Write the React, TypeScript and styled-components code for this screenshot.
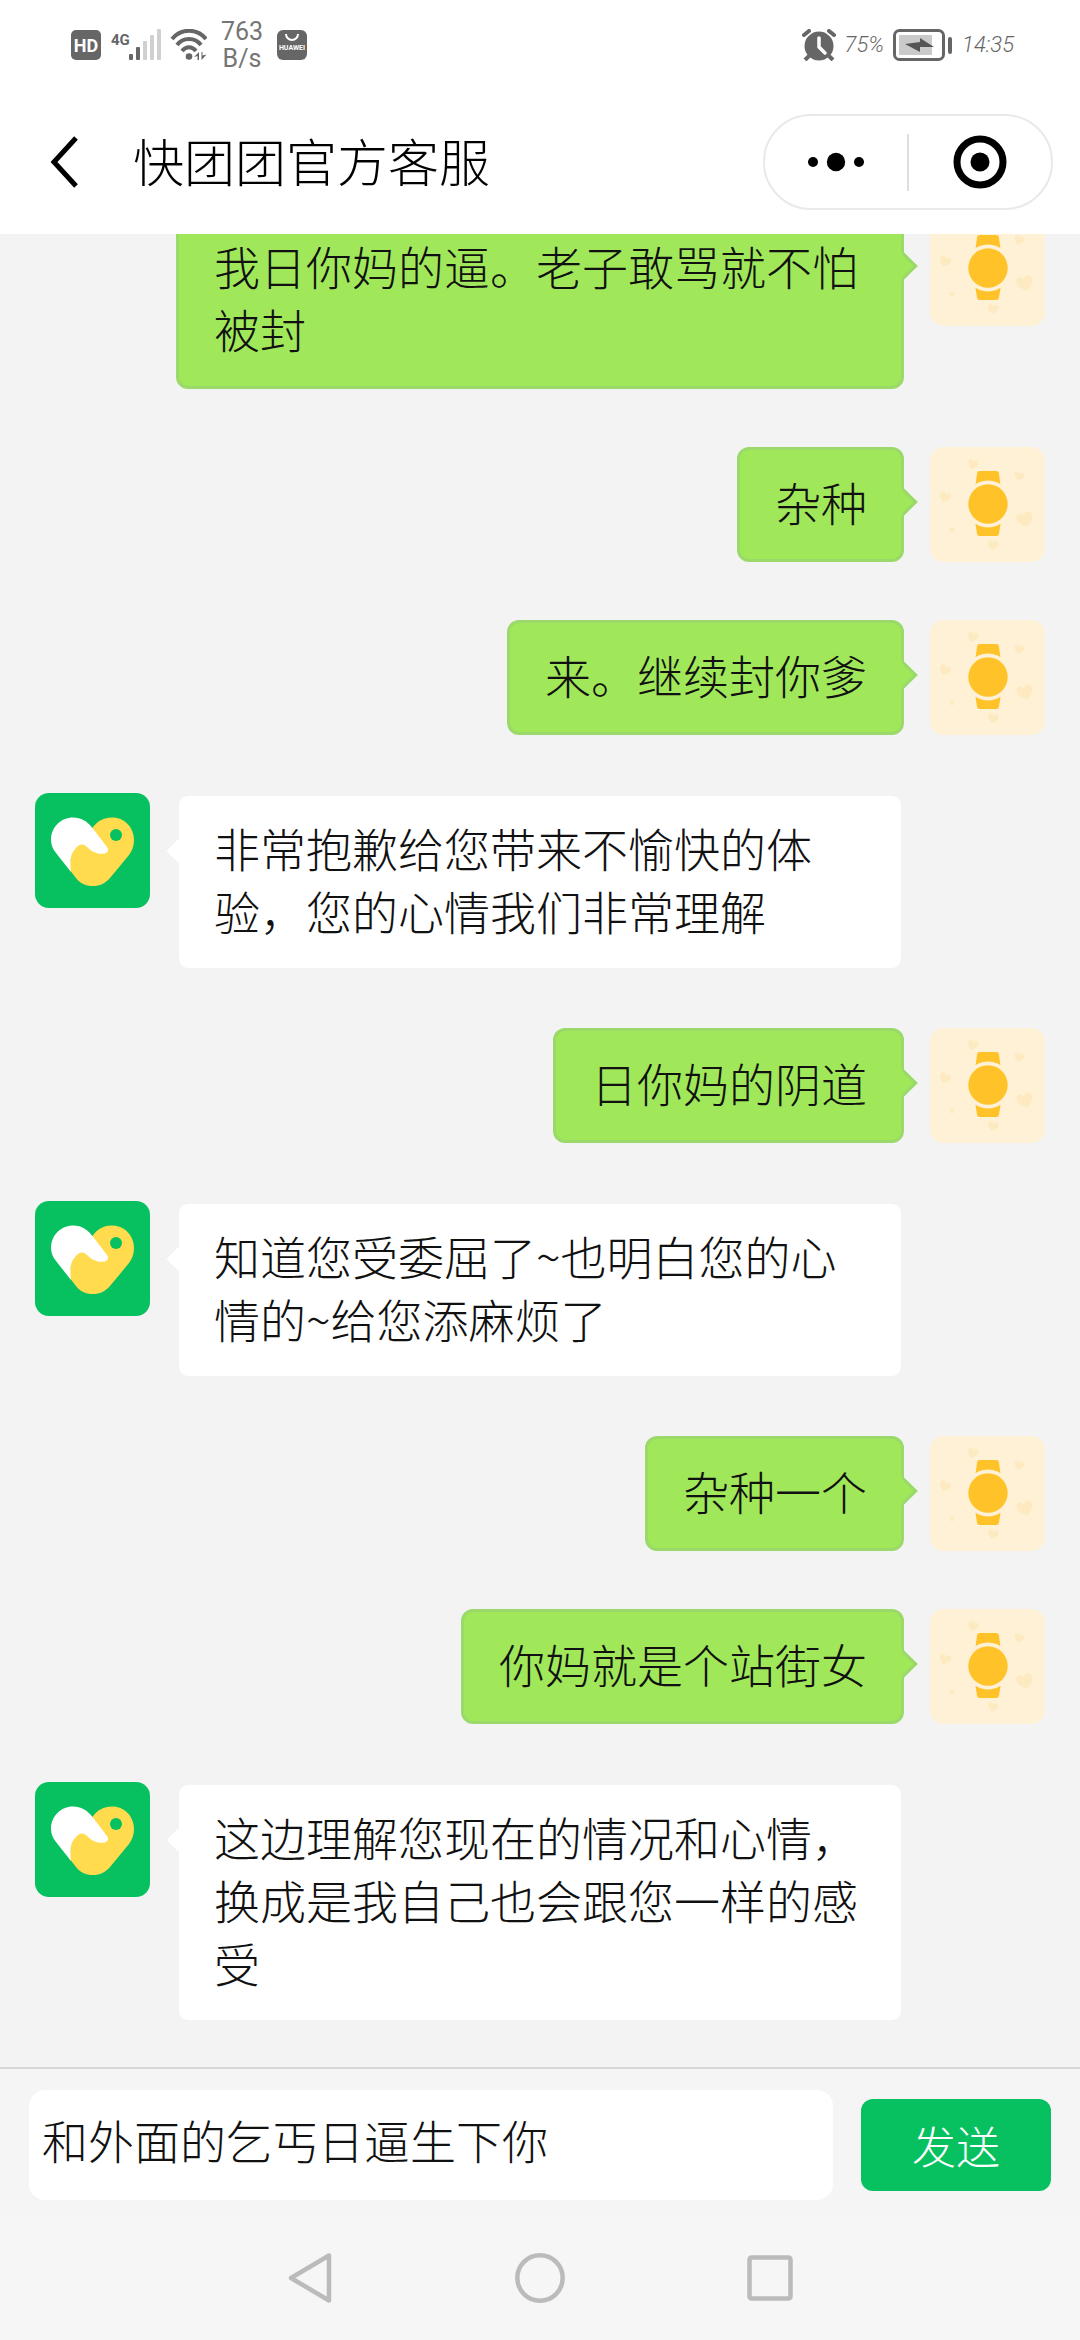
import React, { useState } from "react";
import styled, { createGlobalStyle, css } from "styled-components";

const GlobalStyle = createGlobalStyle`
  *, *::before, *::after { box-sizing: border-box; }
  html, body { margin: 0; padding: 0; }
  body { background: #f3f3f3; }
  button, textarea { font: inherit; color: inherit; border: 0; padding: 0; margin: 0; background: none; }
`;

const handFont = `"Noto Sans CJK SC", "Noto Sans", sans-serif`;

const Screen = styled.div`
  display: flex;
  flex-direction: column;
  height: 100vh;
  font-family: ${handFont};
  font-weight: 300;
  color: #111;
`;

const StatusBar = styled.div`
  display: flex;
  align-items: center;
  justify-content: space-between;
  height: 90px;
  padding: 0 66px 0 71px;
  background: #fff;
  color: #666;
`;

const StatusGroup = styled.div<{ $gap: number }>`
  display: flex;
  align-items: center;
  gap: ${(p) => p.$gap}px;
`;

const NetSpeed = styled.div`
  width: 50px;
  text-align: center;
  font: 400 25px/27px Roboto, sans-serif;
  color: #757575;
`;

const StatusText = styled.span`
  font: italic 300 22px/30px Roboto, sans-serif;
`;

const TitleBar = styled.header`
  display: flex;
  align-items: center;
  height: 144px;
  padding: 0 27px 0 39px;
  background: #fff;
  color: #000;
`;

const BackButton = styled.button`
  display: flex;
  align-items: center;
  justify-content: center;
  width: 52px;
  height: 96px;
`;

const Title = styled.h1`
  flex: 1;
  margin: 0 0 0 42px;
  padding-bottom: 4px;
  font-size: 51px;
  font-weight: 300;
  line-height: 72px;
`;

const Capsule = styled.div`
  display: flex;
  align-items: center;
  width: 290px;
  height: 96px;
  border: 2px solid #e9e9e9;
  border-radius: 48px;
`;

const CapsuleButton = styled.button`
  display: flex;
  flex: 1;
  align-items: center;
  justify-content: center;
  height: 100%;
`;

const CapsuleDivider = styled.span`
  width: 2px;
  height: 57px;
  background: #dedede;
`;

const Chat = styled.main`
  display: flex;
  flex: 1;
  flex-direction: column-reverse;
  min-height: 0;
  overflow-y: auto;
  scrollbar-width: none;
  background: #f3f3f3;
`;

const MessageList = styled.ul`
  margin: 0;
  padding: 0 35px 44px;
  list-style: none;
`;

const MessageRow = styled.li<{ $mine: boolean }>`
  display: flex;
  flex-direction: ${(p) => (p.$mine ? "row-reverse" : "row")};
  align-items: flex-start;
  gap: 26px;
  margin-bottom: ${(p) => (p.$mine ? 58 : 57)}px;
  ${(p) => (p.$mine ? "padding-left: 141px;" : "padding-right: 141px;")}

  &:last-child { margin-bottom: 0; }
`;

const Avatar = styled.svg`
  flex: none;
  width: 115px;
  height: 115px;
  border-radius: 14px;
`;

const mineColors = css`
  background: #a0e85a;
  border-color: #9ad96a;
`;

const theirColors = css`
  background: #fff;
  background-clip: padding-box;
  border-color: transparent;
`;

const Bubble = styled.p<{ $mine: boolean }>`
  position: relative;
  min-width: 0;
  margin: 0;
  padding: 20px 34px 26px 35px;
  border: 3px solid;
  border-radius: 12px;
  font-size: 46px;
  line-height: 63px;
  ${(p) => (p.$mine ? mineColors : theirColors)}

  &::after {
    content: "";
    position: absolute;
    top: ${(p) => (p.$mine ? 41 : 44)}px;
    ${(p) => (p.$mine ? "right: -12px;" : "left: -12px;")}
    width: 22px;
    height: 22px;
    border: 3px solid;
    transform: rotate(45deg);
    ${(p) => (p.$mine ? mineColors : theirColors)}
    ${(p) => p.$mine && "border-left-color: transparent; border-bottom-color: transparent;"}
  }
`;

const Composer = styled.form`
  display: flex;
  align-items: center;
  gap: 28px;
  padding: 21px 29px 16px;
  border-top: 2px solid #d6d6d6;
  background: #f5f5f5;
`;

const MessageInput = styled.textarea`
  display: block;
  flex: 1;
  min-width: 0;
  height: 110px;
  padding: 18px 13px;
  border-radius: 16px;
  outline: 0;
  resize: none;
  overflow: hidden;
  background: #fff;
  font-size: 46px;
  line-height: 63px;
`;

const SendButton = styled.button`
  width: 190px;
  height: 92px;
  border-radius: 12px;
  background: #07c160;
  color: #fff;
  font-size: 44px;
  line-height: 63px;
`;

const NavBar = styled.nav`
  display: flex;
  align-items: center;
  justify-content: center;
  gap: 170px;
  height: 124px;
  background: #f6f6f6;
`;

const NavButton = styled.button`
  display: flex;
  align-items: center;
  justify-content: center;
  width: 60px;
  height: 60px;
`;

const HEART = "M0 8C-6 4-9 0-8-4C-6-8-2-7 0-4C2-7 6-8 8-4C9 0 6 4 0 8Z";

function WatchAvatar() {
  return (
    <Avatar viewBox="0 0 115 115" role="img" aria-label="我">
      <rect width="115" height="115" fill="#fef1d5" />
      <g fill="#fdeac0">
        <path d={HEART} transform="translate(43 17) rotate(15) scale(.65)" />
        <path d={HEART} transform="translate(89 29) rotate(15) scale(.6)" />
        <path d={HEART} transform="translate(15 50) rotate(20) scale(.7)" />
        <path d={HEART} transform="translate(95 72) rotate(-15)" />
        <path d={HEART} transform="translate(22 83) scale(.35)" />
        <path d={HEART} transform="translate(63 98) rotate(10) scale(.65)" />
      </g>
      <path d="M49.500 24h17q2 0 2.400 2l1.600 12h-25l1.600-12q.4-2 2.400-2ZM45.500 77h25l-1.600 10q-.4 2-2.400 2h-17q-2 0-2.400-2Z" fill="#ffc229" />
      <circle cx="58" cy="57" r="23.500" fill="#fef1d5" />
      <circle cx="58" cy="57" r="19.700" fill="#ffc229" />
    </Avatar>
  );
}

function ServiceAvatar() {
  return (
    <Avatar viewBox="0 0 115 115" role="img" aria-label="快团团官方客服">
      <rect width="115" height="115" fill="#07c160" />
      <path d="M57.500 35C62 28 69 24.500 77 24.500C90 24.500 99 35 99 47C99 53 97 58 94 62L75 85C70 90.500 65 93 58 93C51 93 45 90.500 41 85L34 76L38 50Z" fill="#ffdb4d" />
      <path d="M38 24.500C46 24.500 52 28 57.500 35L72 54Q75 58 70 60.500C62 62 56 58 52 54C48 50 44 51 41 55C36 60 34.500 66 36 79L21 60C17.500 55.500 16 51.500 16 47C16 34 26 24.500 38 24.500Z" fill="#fff" />
      <circle cx="81" cy="42" r="6" fill="#07c160" />
    </Avatar>
  );
}

const StatusLeft = () => (
  <StatusGroup $gap={10}>
    <svg width="136" height="32" viewBox="0 0 136 32" aria-label="HD 4G">
      <rect y="1" width="30" height="30" rx="5" fill="#666" />
      <text x="15" y="23" textAnchor="middle" fontFamily="Roboto" fontWeight="700" fontSize="18" fill="#fff">HD</text>
      <text x="40" y="16" fontFamily="Roboto" fontWeight="700" fontSize="15" fill="#666">4G</text>
      <g fill="#666">
        <rect x="58" y="25" width="4" height="6" rx="1" />
        <rect x="65" y="18" width="4" height="13" rx="1" />
      </g>
      <g fill="#d0d0d0">
        <rect x="72" y="12" width="4" height="19" rx="1" />
        <rect x="79" y="6" width="4" height="25" rx="1" />
        <rect x="86" y="0" width="4" height="31" rx="1" />
      </g>
      <g fill="none" stroke="#666" strokeWidth="4">
        <path d="M101 10C110-1 126-1 135 10" />
        <path d="M106 16C112 8 124 8 130 16" />
        <path d="M111 22C115 17 121 17 125 22" />
      </g>
      <circle cx="118" cy="27.500" r="3.300" fill="#666" />
      <path d="M128 23v8h-1.500v-4l-3.500 1zM130.500 31v-8h1v3.500l4-1z" fill="#666" />
    </svg>
    <NetSpeed>763<br />B/s</NetSpeed>
    <svg width="30" height="32" viewBox="0 0 30 32" aria-label="HUAWEI">
      <rect y="1" width="30" height="30" rx="6" fill="#666" />
      <path d="M9 5a6 6 0 0 0 12 0" fill="none" stroke="#fff" strokeWidth="2" />
      <text x="15" y="21" textAnchor="middle" fontFamily="Roboto" fontWeight="700" fontSize="7" fill="#fff">HUAWEI</text>
    </svg>
  </StatusGroup>
);

const StatusRight = () => (
  <StatusGroup $gap={9}>
    <svg width="34" height="32" viewBox="0 0 34 32" aria-label="闹钟">
      <circle cx="17" cy="17" r="14.500" fill="#666" />
      <path d="M7 27l-4 4M27 27l4 4" stroke="#666" strokeWidth="4" />
      <path d="M2 6l5-4M32 6l-5-4" stroke="#fff" strokeWidth="7" strokeLinecap="round" />
      <path d="M2 6l5-4M32 6l-5-4" stroke="#666" strokeWidth="4" strokeLinecap="round" />
      <path d="M17 9v9l6 6" fill="none" stroke="#fff" strokeWidth="3.500" strokeLinecap="round" />
    </svg>
    <StatusText>75%</StatusText>
    <svg width="60" height="32" viewBox="0 0 60 32" aria-label="充电中">
      <rect x="1.500" y="1.500" width="49" height="29" rx="5" fill="#fff" stroke="#666" strokeWidth="3" />
      <rect x="6" y="6" width="33" height="20" rx="1" fill="#cacaca" />
      <path d="M12 15l15-2v-4l14 9-14 0 0 5z" fill="#555" />
      <rect x="55" y="8" width="4" height="17" rx="2" fill="#666" />
    </svg>
    <StatusText>14:35</StatusText>
  </StatusGroup>
);

const messages: { mine: boolean; text: string }[] = [
  { mine: true, text: "我日你妈的逼。老子敢骂就不怕被封" },
  { mine: true, text: "杂种" },
  { mine: true, text: "来。继续封你爹" },
  { mine: false, text: "非常抱歉给您带来不愉快的体验，您的心情我们非常理解" },
  { mine: true, text: "日你妈的阴道" },
  { mine: false, text: "知道您受委屈了~也明白您的心情的~给您添麻烦了" },
  { mine: true, text: "杂种一个" },
  { mine: true, text: "你妈就是个站街女" },
  { mine: false, text: "这边理解您现在的情况和心情，换成是我自己也会跟您一样的感受" },
];

export default function App() {
  const [draft, setDraft] = useState("和外面的乞丐日逼生下你");
  return (
    <Screen lang="zh-CN">
      <GlobalStyle />
      <StatusBar>
        <StatusLeft />
        <StatusRight />
      </StatusBar>
      <TitleBar>
        <BackButton aria-label="返回">
          <svg width="30" height="52" viewBox="0 0 30 52">
            <path d="M26 2L4 26L26 50" fill="none" stroke="#000" strokeWidth="5" />
          </svg>
        </BackButton>
        <Title>快团团官方客服</Title>
        <Capsule>
          <CapsuleButton aria-label="更多">
            <svg width="58" height="20" viewBox="0 0 58 20">
              <circle cx="6" cy="10" r="5" />
              <circle cx="29" cy="10" r="9.200" />
              <circle cx="52" cy="10" r="5" />
            </svg>
          </CapsuleButton>
          <CapsuleDivider />
          <CapsuleButton aria-label="关闭">
            <svg width="54" height="54" viewBox="0 0 54 54">
              <circle cx="27" cy="27" r="23" fill="none" stroke="#000" strokeWidth="7" />
              <circle cx="27" cy="27" r="9.500" />
            </svg>
          </CapsuleButton>
        </Capsule>
      </TitleBar>
      <Chat>
        <MessageList>
          {messages.map((m, i) => (
            <MessageRow key={i} $mine={m.mine}>
              {m.mine ? <WatchAvatar /> : <ServiceAvatar />}
              <Bubble $mine={m.mine}>{m.text}</Bubble>
            </MessageRow>
          ))}
        </MessageList>
      </Chat>
      <Composer onSubmit={(e) => e.preventDefault()}>
        <MessageInput aria-label="消息" value={draft} onChange={(e) => setDraft(e.target.value)} />
        <SendButton type="submit">发送</SendButton>
      </Composer>
      <NavBar>
        <NavButton aria-label="后退">
          <svg width="48" height="52" viewBox="0 0 48 52">
            <path d="M43 3.500V48.500L5 26Z" fill="none" stroke="#bbb" strokeWidth="4.500" strokeLinejoin="round" />
          </svg>
        </NavButton>
        <NavButton aria-label="主页">
          <svg width="52" height="52" viewBox="0 0 52 52">
            <circle cx="26" cy="26" r="22.700" fill="none" stroke="#bbb" strokeWidth="4.500" />
          </svg>
        </NavButton>
        <NavButton aria-label="最近任务">
          <svg width="46" height="46" viewBox="0 0 46 46">
            <rect x="2.500" y="2.500" width="41" height="41" rx="2" fill="none" stroke="#bbb" strokeWidth="4.500" />
          </svg>
        </NavButton>
      </NavBar>
    </Screen>
  );
}
